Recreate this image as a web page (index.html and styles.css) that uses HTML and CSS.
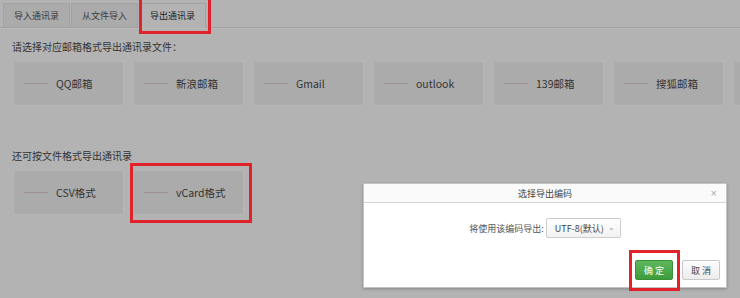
FILE: index.html
```html
<!DOCTYPE html>
<html lang="zh">
<head>
<meta charset="utf-8">
<link rel="stylesheet" href="styles.css">
</head>
<body>
<div class="page">
  <div class="tabs">
    <div class="tab">导入通讯录</div>
    <div class="tab">从文件导入</div>
    <div class="tab active">导出通讯录</div>
  </div>
  <div class="content">
    <p class="section-title first">请选择对应邮箱格式导出通讯录文件：</p>
    <div class="cards">
      <div class="card"><span class="line"></span><span class="label">QQ邮箱</span></div>
      <div class="card"><span class="line"></span><span class="label">新浪邮箱</span></div>
      <div class="card"><span class="line"></span><span class="label">Gmail</span></div>
      <div class="card"><span class="line"></span><span class="label">outlook</span></div>
      <div class="card"><span class="line"></span><span class="label">139邮箱</span></div>
      <div class="card"><span class="line"></span><span class="label">搜狐邮箱</span></div>
      <div class="card"></div>
    </div>
    <p class="section-title second">还可按文件格式导出通讯录</p>
    <div class="cards">
      <div class="card"><span class="line"></span><span class="label">CSV格式</span></div>
      <div class="card"><span class="line"></span><span class="label">vCard格式</span></div>
    </div>
  </div>

  <div class="dialog">
    <div class="dialog-head">
      <span class="dialog-title">选择导出编码</span>
      <span class="dialog-close">×</span>
    </div>
    <div class="dialog-body">
      <span class="field-label">将使用该编码导出:</span>
      <span class="select">UTF-8(默认)<span class="chev">⌄</span></span>
    </div>
    <div class="dialog-foot">
      <span class="btn btn-ok">确 定</span>
      <span class="btn btn-cancel">取 消</span>
    </div>
  </div>

  <div class="mark mark-tab"></div>
  <div class="mark mark-vcard"></div>
  <div class="mark mark-ok"></div>
</div>
</body>
</html>
```

FILE: styles.css
```css
html, body {
  margin: 0;
  padding: 0;
}
body {
  width: 740px;
  height: 298px;
  overflow: hidden;
  background: #b3b3b3;
  font-family: "Noto Sans CJK SC", "Liberation Sans", sans-serif;
  color: #333;
}
.page {
  position: relative;
  width: 740px;
  height: 298px;
  overflow: hidden;
}
.tabs {
  display: flex;
  align-items: flex-end;
  height: 27px;
  padding-left: 3px;
  border-bottom: 1px solid #a2a2a2;
  box-shadow: 0 1px 0 #b9b9b9;
}
.tab {
  box-sizing: border-box;
  height: 25px;
  margin-bottom: -1px;
  margin-right: 1px;
  padding: 0 10px;
  line-height: 23px;
  font-size: 9px;
  color: #3a3a3a;
  background: #ababab;
  border: 1px solid #a2a2a2;
}
.tab.active {
  background: #b3b3b3;
  border-bottom-color: #b3b3b3;
  color: #222;
}
.content {
  padding: 0 13px;
}
.section-title {
  margin: 0;
  font-size: 10px;
  line-height: 16px;
  color: #333;
}
.section-title.first {
  margin-top: 11px;
  margin-left: -1px;
}
.section-title.second {
  margin-top: 42px;
  margin-left: -1px;
}
.cards {
  display: flex;
  gap: 9px;
  margin-top: 6px;
  width: 1000px;
}
.card {
  box-sizing: border-box;
  flex: 0 0 111px;
  height: 45px;
  display: flex;
  align-items: center;
  padding-left: 10px;
  background: #ababab;
  border: 1px solid #b6b6b6;
}
.line {
  width: 24px;
  height: 1px;
  background: #9e8e8f;
  margin-right: 8px;
}
.label {
  font-size: 10.5px;
  color: #333;
}
.dialog {
  position: absolute;
  left: 363px;
  top: 183px;
  width: 364px;
  height: 105px;
  box-sizing: border-box;
  background: #fff;
  border: 1px solid #c4c4c4;
  box-shadow: 0 1px 3px rgba(0,0,0,0.25);
  display: flex;
  flex-direction: column;
}
.dialog-head {
  position: relative;
  height: 18px;
  display: flex;
  align-items: center;
  justify-content: center;
  background: #fafafa;
  border-bottom: 1px solid #d6d6d6;
}
.dialog-title {
  font-size: 9px;
  color: #444;
}
.dialog-close {
  position: absolute;
  right: 9px;
  top: 2px;
  font-size: 11px;
  line-height: 14px;
  color: #aaa;
  font-family: "Liberation Sans", sans-serif;
}
.dialog-body {
  display: flex;
  align-items: center;
  justify-content: center;
  margin-top: 15px;
  gap: 2px;
}
.field-label {
  font-size: 9px;
  color: #555;
}
.select {
  box-sizing: border-box;
  height: 20px;
  width: 75px;
  display: inline-flex;
  align-items: center;
  padding-left: 8px;
  border: 1px solid #cdcdcd;
  border-radius: 2px;
  background: linear-gradient(#fff, #f2f2f2);
  font-size: 9px;
  color: #444;
}
.chev {
  margin-left: 4px;
  font-size: 8px;
  color: #999;
  position: relative;
  top: -2px;
}
.dialog-foot {
  display: flex;
  justify-content: flex-end;
  gap: 9px;
  padding-right: 6px;
  margin-top: 22px;
}
.btn {
  box-sizing: border-box;
  width: 38px;
  height: 20px;
  display: flex;
  align-items: center;
  justify-content: center;
  font-size: 9px;
  border-radius: 2px;
}
.btn-ok {
  color: #fff;
  background: linear-gradient(#5db85b, #3e9c3c);
  border: 1px solid #3a8f38;
}
.btn-cancel {
  color: #444;
  background: linear-gradient(#fdfdfd, #ececec);
  border: 1px solid #c8c8c8;
}
.mark {
  position: absolute;
  box-sizing: border-box;
  border: 3px solid #e2222a;
}
.mark-tab {
  left: 139px;
  top: -3px;
  width: 72px;
  height: 37px;
}
.mark-vcard {
  left: 130px;
  top: 163px;
  width: 122px;
  height: 60px;
}
.mark-ok {
  left: 629px;
  top: 250px;
  width: 51px;
  height: 41px;
}
```
